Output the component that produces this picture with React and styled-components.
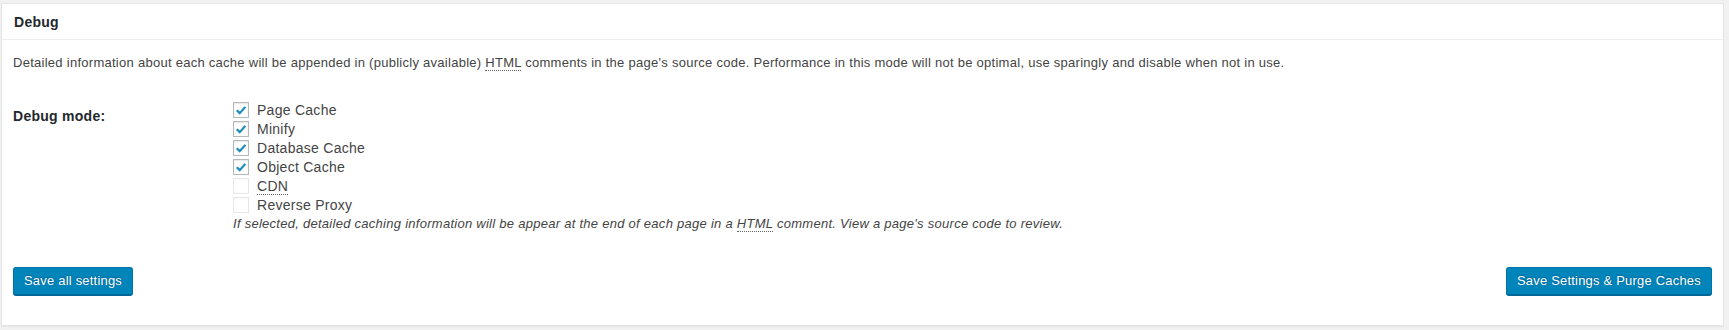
import styled, { createGlobalStyle } from "styled-components";

const GlobalStyle = createGlobalStyle`
  html, body {
    margin: 0;
    background: #f1f1f1;
  }
  body {
    font-family: "Liberation Sans", Arial, sans-serif;
    font-size: 13px;
    letter-spacing: 0.27px;
    color: #444;
  }
`;

const Page = styled.div`
  padding: 3px 5px 4px 1px;
`;

const Postbox = styled.div`
  background: #fff;
  border: 1px solid #e5e5e5;
  box-shadow: 0 1px 1px rgba(0, 0, 0, 0.04);
`;

const Header = styled.h3`
  margin: 0;
  padding: 0 12px;
  height: 35px;
  display: flex;
  align-items: center;
  font-size: 14px;
  font-weight: 700;
  color: #23282d;
  border-bottom: 1px solid #eee;
`;

const Inside = styled.div`
  padding: 0 11px 29px 11px;
`;

const Description = styled.p`
  margin: 13px 0;
  line-height: 19.5px;
`;

const Abbr = styled.abbr`
  text-decoration: none;
  border-bottom: 1px dotted #666;
`;

const FieldRow = styled.div`
  display: flex;
  padding-top: 1px;
`;

const FieldLabel = styled.div`
  width: 200px;
  padding: 20px 10px 20px 0;
  font-size: 14px;
  font-weight: 700;
  color: #23282d;
  line-height: 18px;
`;

const FieldBody = styled.div`
  padding: 14px 10px 15px;
  display: flex;
  flex-direction: column;
`;

const Option = styled.label`
  display: flex;
  align-items: center;
  gap: 8px;
  height: 19px;
  font-size: 14px;
  color: #444;
`;

const Box = styled.span`
  width: 14px;
  height: 14px;
  border: 1px solid ${(p) => (p.$disabled ? "#e6e7e8" : "#b4b9be")};
  box-shadow: inset 0 1px 2px rgba(0, 0, 0, ${(p) => (p.$disabled ? 0.03 : 0.1)});
  background: #fff;
  display: flex;
  align-items: center;
  justify-content: center;
`;

const Hint = styled.p`
  margin: 0;
  font-style: italic;
  font-size: 13px;
  line-height: 18px;
`;

const Actions = styled.div`
  display: flex;
  justify-content: space-between;
  padding-top: 19px;
  padding-bottom: 1px;
`;

const Button = styled.button`
  height: 28px;
  padding: 0 10px 1px;
  font-family: inherit;
  font-size: 13px;
  letter-spacing: 0.2px;
  color: #fff;
  background: #0085ba;
  border: 1px solid #0073aa;
  border-bottom-color: #006799;
  border-radius: 3px;
  box-shadow: 0 1px 0 #006799;
  text-shadow: 0 -1px 1px #006799, 1px 0 1px #006799;
  cursor: pointer;
`;

function Check() {
  return (
    <svg width="15" height="15" viewBox="0 0 16 16">
      <path
        d="M2.2 8.6 L4.1 6.8 L6.6 9.2 L12 3 L14 4.6 L6.6 12.9 Z"
        fill="#1e8cbe"
      />
    </svg>
  );
}

const options = [
  { label: "Page Cache", checked: true },
  { label: "Minify", checked: true },
  { label: "Database Cache", checked: true },
  { label: "Object Cache", checked: true },
  { label: <Abbr title="Content Delivery Network">CDN</Abbr>, disabled: true },
  { label: "Reverse Proxy", disabled: true },
];

export default function App() {
  return (
    <>
      <GlobalStyle />
      <Page>
        <Postbox>
          <Header>Debug</Header>
          <Inside>
            <Description>
              Detailed information about each cache will be appended in (publicly
              available) <Abbr title="Hypertext Markup Language">HTML</Abbr>{" "}
              comments in the page's source code. Performance in this mode will not
              be optimal, use sparingly and disable when not in use.
            </Description>
            <FieldRow>
              <FieldLabel>Debug mode:</FieldLabel>
              <FieldBody>
                {options.map((o, i) => (
                  <Option key={i}>
                    <Box $disabled={o.disabled}>{o.checked && <Check />}</Box>
                    {o.label}
                  </Option>
                ))}
                <Hint>
                  If selected, detailed caching information will be appear at the
                  end of each page in a <Abbr title="Hypertext Markup Language">HTML</Abbr>{" "}
                  comment. View a page's source code to review.
                </Hint>
              </FieldBody>
            </FieldRow>
            <Actions>
              <Button>Save all settings</Button>
              <Button>Save Settings &amp; Purge Caches</Button>
            </Actions>
          </Inside>
        </Postbox>
      </Page>
    </>
  );
}
